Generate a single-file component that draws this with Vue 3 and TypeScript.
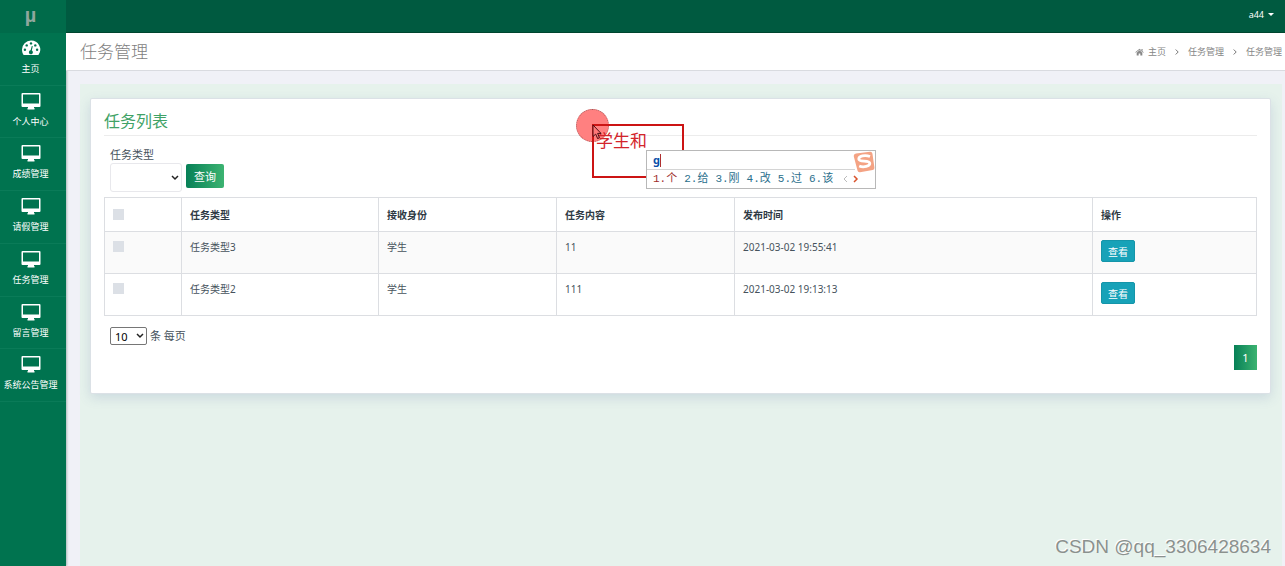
<script setup lang="ts">
import { ref } from 'vue'

interface Task {
  id: number
  type: string
  receiver: string
  content: string
  time: string
}

const menu: string[] = ['个人中心', '成绩管理', '请假管理', '任务管理', '留言管理', '系统公告管理']
const tasks: Task[] = [
  { id: 3, type: '任务类型3', receiver: '学生', content: '11', time: '2021-03-02 19:55:41' },
  { id: 2, type: '任务类型2', receiver: '学生', content: '111', time: '2021-03-02 19:13:13' },
]
const candidates: string[] = ['个', '给', '刚', '改', '过', '该']
const taskType = ref('')
const pageSize = ref('10')
const selected = ref<number[]>([])
</script>

<template>
  <div class="page">
    <aside class="sidebar">
      <a class="brand" href="#">µ</a>
      <nav class="menu">
        <a class="item" href="#">
          <svg class="icon" viewBox="0 0 20 16" aria-hidden="true">
            <path fill="#fff" d="M10 .5a9 9 0 0 0-9 9c0 1.800.5 3.600 1.300 5q.3.500.8.500h13.800q.5 0 .8-.5A9 9 0 0 0 10 .5z" />
            <g fill="#00734f">
              <circle cx="3.900" cy="9.800" r="1.200" /><circle cx="5.700" cy="5.400" r="1.200" />
              <circle cx="10" cy="3.400" r="1.200" /><circle cx="14.300" cy="5.400" r="1.200" />
              <circle cx="16.100" cy="9.800" r="1.200" />
              <path d="M10.800 5.900l1 .3-1 4.300a2 2 0 1 1-1.200-.2z" />
            </g>
          </svg>
          <span>主页</span>
        </a>
        <a v-for="name in menu" :key="name" class="item" href="#">
          <svg class="icon" viewBox="0 0 20 16" aria-hidden="true">
            <path fill="#fff" fill-rule="evenodd" d="M1.500 0h17Q19.500 0 19.500 1v12q0 1-1 1h-5.500v1h.5v1.500h-7V15H7v-1H1.500q-1 0-1-1V1Q.5 0 1.500 0zM2 1.500v9h16v-9z" />
          </svg>
          <span>{{ name }}</span>
        </a>
      </nav>
    </aside>

    <div class="body">
      <header class="topbar">
        <button class="user" type="button">a44 <span class="caret"></span></button>
      </header>

      <div class="heading">
        <h1>任务管理</h1>
        <nav class="crumbs">
          <a href="#">
            <svg class="home" viewBox="0 0 16 14" aria-hidden="true">
              <path fill="currentColor" d="M8 1l7.500 6.300-.9 1L8 2.900 1.400 8.300l-.9-1zM8 4l5 4.200V13H9.500V9.500h-3V13H3V8.200zM11.500 1.500h2V5l-2-1.700z" />
            </svg>
            主页
          </a>
          <svg class="sep" viewBox="0 0 4 6" aria-hidden="true"><path d="M.7.5L3.200 3 .7 5.500" /></svg>
          <a href="#">任务管理</a>
          <svg class="sep" viewBox="0 0 4 6" aria-hidden="true"><path d="M.7.5L3.200 3 .7 5.500" /></svg>
          <span>任务管理</span>
        </nav>
      </div>

      <main class="content">
        <section class="card">
          <h2>任务列表</h2>
          <form class="filter" @submit.prevent>
            <div class="field">
              <label for="task-type">任务类型</label>
              <span class="picker">
                <select id="task-type" v-model="taskType"><option value=""></option></select>
                <svg viewBox="0 0 8 6" aria-hidden="true"><path d="M1 1l3 3 3-3" /></svg>
              </span>
            </div>
            <button class="search" type="submit">查询</button>
          </form>

          <table>
            <colgroup>
              <col class="c-check" /><col class="c-type" /><col class="c-mid" /><col class="c-mid" /><col class="c-time" /><col class="c-action" />
            </colgroup>
            <thead>
              <tr>
                <th class="check"><input type="checkbox" aria-label="全选" /></th>
                <th>任务类型</th>
                <th>接收身份</th>
                <th>任务内容</th>
                <th>发布时间</th>
                <th>操作</th>
              </tr>
            </thead>
            <tbody>
              <tr v-for="task in tasks" :key="task.id">
                <td class="check"><input v-model="selected" type="checkbox" :value="task.id" :aria-label="task.type" /></td>
                <td>{{ task.type }}</td>
                <td>{{ task.receiver }}</td>
                <td>{{ task.content }}</td>
                <td>{{ task.time }}</td>
                <td><button class="view" type="button">查看</button></td>
              </tr>
            </tbody>
          </table>

          <div class="size">
            <span class="picker">
              <select id="page-size" v-model="pageSize"><option>10</option></select>
              <svg viewBox="0 0 8 6" aria-hidden="true"><path d="M1 1l3 3 3-3" /></svg>
            </span>
            <label for="page-size">条 每页</label>
          </div>
          <div class="pager"><button type="button">1</button></div>
        </section>
      </main>
    </div>

    <div class="click-dot"></div>
    <div class="compose">学生和</div>
    <svg class="cursor" viewBox="0 0 10 16" aria-hidden="true">
      <path d="M1 1v11.500l2.700-2.400 1.900 4.400 1.900-.8-1.900-4.300H9z" fill="#f77" stroke="#4a1015" />
    </svg>
    <div class="ime">
      <div class="typed">g<i></i></div>
      <ol>
        <li v-for="(word, i) in candidates" :key="word">{{ i + 1 }}.{{ word }}</li>
        <li class="arrows">
          <svg viewBox="0 0 16 8" aria-hidden="true">
            <path d="M4 1L1 4l3 3" stroke="#bbb" /><path d="M11 1l3 3-3 3" stroke="#d9532c" stroke-width="1.500" />
          </svg>
        </li>
      </ol>
      <svg class="sogou" viewBox="0 0 22 22" aria-hidden="true">
        <path d="M3 2.500L17 .7q2-.2 2.400 1.700l2 14q.3 2-1.700 2.500L7 21.300q-2 .3-2.500-1.700L.8 5.500Q.5 3 3 2.500z" fill="#f4a384" />
        <path d="M17 5.500C12 3.500 5.500 5 5.800 8.200c.3 3.300 10.500.7 11 4 .3 3-6.300 4.600-10.600 2.800" fill="none" stroke="#fff" stroke-width="2.800" />
      </svg>
    </div>
    <div class="watermark">CSDN @qq_3306428634</div>
  </div>
</template>

<style>
body {
  margin: 0;
}
</style>

<style scoped>
* {
  box-sizing: border-box;
}
.page {
  position: relative;
  display: flex;
  min-height: 100vh;
  overflow: hidden;
  background: #f0f1f7;
  color: #46525c;
  font: 10px/16px "Noto Sans", "Noto Sans CJK SC", sans-serif;
}
a {
  color: inherit;
  text-decoration: none;
}
button,
select {
  font-family: inherit;
}
.sidebar {
  flex: 0 0 66px;
  background: #00734f;
  color: #fff;
  box-shadow: 1px 0 2px rgba(0, 60, 40, 0.3);
}
.brand {
  display: flex;
  height: 33px;
  align-items: center;
  justify-content: center;
  padding: 0 5px 2px 0;
  background: #006b4a;
  color: #8fa79d;
  font: bold 20px/31px "Liberation Sans", sans-serif;
}
.menu {
  display: grid;
  grid-auto-rows: 1fr;
  height: 369px;
}
.item {
  display: flex;
  flex-direction: column;
  align-items: center;
  gap: 5px;
  padding: 7px 5px 0 0;
  border-bottom: 1px solid #0a7b58;
  font-size: 9px;
  line-height: 16px;
  white-space: nowrap;
}
.icon {
  width: 20px;
  height: 16px;
  overflow: visible;
}
.body {
  display: flex;
  flex: 1;
  flex-direction: column;
  min-width: 0;
}
.topbar {
  display: flex;
  height: 33px;
  align-items: center;
  justify-content: flex-end;
  padding: 0 11px 4px 0;
  border-bottom: 1px solid #00452f;
  background: #005a40;
}
.user {
  display: flex;
  align-items: center;
  gap: 4px;
  padding: 0;
  border: 0;
  background: none;
  color: #fff;
  font-size: 9px;
}
.caret {
  border: 3px solid transparent;
  border-top-color: #fff;
  border-bottom: 0;
}
.heading {
  display: flex;
  height: 38px;
  align-items: center;
  justify-content: space-between;
  padding: 0 3px 0 14px;
  border-bottom: 1px solid #d9dbe0;
  background: #fff;
}
h1 {
  margin: 0;
  color: #7e7e7e;
  font-size: 17px;
  font-weight: 300;
}
.crumbs {
  display: flex;
  align-items: center;
  gap: 9px;
  color: #868686;
  font-size: 9px;
}
.crumbs a {
  display: flex;
  align-items: center;
  gap: 4px;
}
.home {
  width: 9px;
  height: 8px;
}
.sep {
  width: 4px;
  height: 6px;
  fill: none;
  stroke: #777;
}
.content {
  flex: 1;
  margin: 13px 3px 0 14px;
  padding: 14px 11px 14px 10px;
  background: #e6f2ec;
}
.card {
  padding: 13px 13px 23px;
  border: 1px solid #dbe1e6;
  border-radius: 2px;
  background: #fff;
  box-shadow: 0 4px 12px rgba(80, 100, 160, 0.17);
}
h2 {
  margin: 0 0 11px;
  padding-bottom: 5px;
  border-bottom: 1px solid #ececec;
  color: #40a266;
  font-size: 16px;
  font-weight: 400;
  line-height: 18px;
}
.filter {
  display: flex;
  align-items: flex-end;
  gap: 4px;
  margin: 0 0 5px 6px;
}
.field {
  display: flex;
  flex-direction: column;
  width: 72px;
  font-size: 11px;
}
.picker {
  display: grid;
  align-items: center;
}
.picker select,
.picker svg {
  grid-area: 1 / 1;
}
.picker select {
  appearance: none;
  width: 100%;
  background: #fff;
}
.picker svg {
  width: 8px;
  height: 6px;
  margin-right: 3px;
  justify-self: end;
  fill: none;
  stroke: #222;
  stroke-width: 1.5px;
  pointer-events: none;
}
.field select {
  height: 29px;
  border: 1px solid #e8e8ec;
  border-radius: 3px;
}
.search {
  height: 24px;
  margin-bottom: 4px;
  padding: 0 8px;
  border: 0;
  border-radius: 2px;
  background: linear-gradient(90deg, #078057, #3cb371);
  color: #fff;
  font-size: 11px;
}
table {
  width: 100%;
  table-layout: fixed;
  border-collapse: collapse;
}
.c-check {
  width: 77px;
}
.c-type {
  width: 197px;
}
.c-mid {
  width: 178px;
}
.c-time {
  width: 358px;
}
th,
td {
  padding: 7px 8px 0;
  border: 1px solid #dcdee2;
  text-align: left;
  vertical-align: top;
}
th {
  height: 34px;
  padding-top: 9px;
  color: #2e3a44;
  font-weight: 600;
}
td {
  height: 42px;
}
tbody tr:nth-child(odd) {
  background: #fafafa;
}
.check input {
  appearance: none;
  display: block;
  width: 11px;
  height: 11px;
  margin: 2px 0 0;
  background: #dce0e6;
}
.view {
  display: block;
  height: 22px;
  margin-top: 1px;
  padding: 0 6px;
  border: 1px solid #1595a9;
  border-radius: 2px;
  background: #17a2b8;
  color: #fff;
  font-size: 10px;
}
.size {
  display: flex;
  align-items: center;
  gap: 3px;
  margin: 11px 0 0 6px;
  font-size: 11px;
  line-height: 18px;
}
.size .picker {
  width: 37px;
}
.size select {
  height: 18px;
  padding: 0 0 0 4px;
  border: 1px solid #767676;
  border-radius: 2px;
  color: #000;
  font-size: 11px;
}
.pager {
  display: flex;
  justify-content: flex-end;
}
.pager button {
  width: 23px;
  height: 25px;
  padding: 0;
  border: 0;
  background: linear-gradient(90deg, #078057, #3cb371);
  color: #fff;
  font-size: 11px;
}
.click-dot {
  position: absolute;
  top: 109px;
  left: 576px;
  width: 33px;
  height: 33px;
  border: 1px dotted #a65a5a;
  border-radius: 50%;
  background: #ff8080;
}
.compose {
  position: absolute;
  top: 124px;
  left: 592px;
  width: 92px;
  height: 54px;
  padding: 2px;
  border: 2px solid #cc1414;
  color: #d3242b;
  font-size: 17px;
  line-height: 26px;
}
.cursor {
  position: absolute;
  top: 124px;
  left: 592px;
  width: 10px;
  height: 16px;
}
.ime {
  position: absolute;
  top: 150px;
  left: 646px;
  width: 230px;
  height: 39px;
  border: 1px solid #b8b8b8;
  background: #fff;
}
.typed {
  display: flex;
  height: 19px;
  align-items: center;
  margin-right: 20px;
  padding-left: 6px;
  border-bottom: 1px solid #d4d4d4;
  color: #0a4fa8;
  font: bold 11px/18px "Noto Sans", sans-serif;
}
.typed i {
  width: 1px;
  height: 13px;
  background: #b03030;
}
ol {
  display: flex;
  align-items: center;
  gap: 7px;
  margin: 0;
  padding: 0 0 0 6px;
  color: #2b6f8c;
  font: 11px/18px "Liberation Mono", "Noto Sans CJK SC", monospace;
  list-style: none;
}
li:first-child {
  color: #a02c2c;
}
.arrows svg {
  display: block;
  width: 16px;
  height: 8px;
  margin-left: 3px;
  fill: none;
}
.sogou {
  position: absolute;
  top: 0;
  right: 0;
  width: 22px;
  height: 22px;
}
.watermark {
  position: absolute;
  right: 14px;
  bottom: 8px;
  color: #8b918e;
  font: 19px/22px "Liberation Sans", Arial, sans-serif;
  text-shadow: -1px -1px 0 #fff;
}
</style>
